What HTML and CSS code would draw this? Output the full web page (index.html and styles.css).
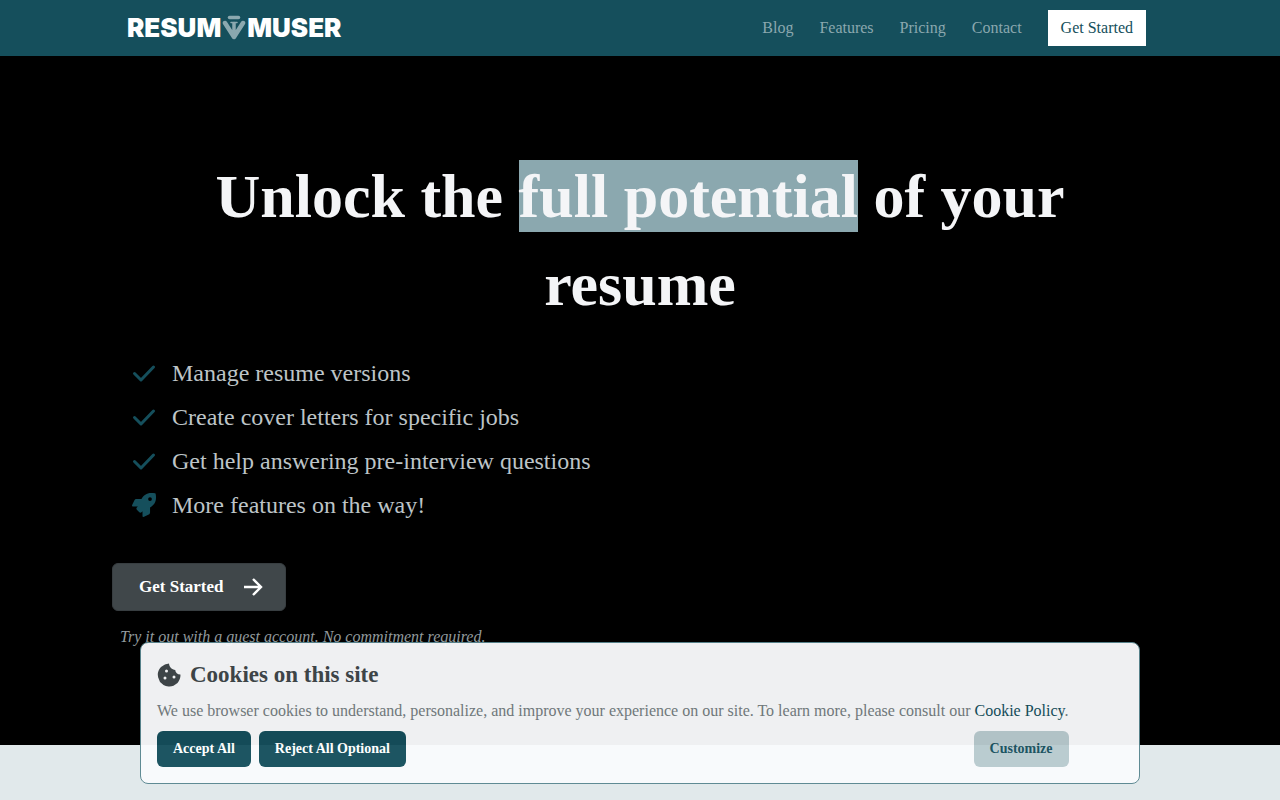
FILE: index.html
```
<!DOCTYPE html>
<html lang="en">
<head>
    <meta charset="UTF-8">
    <meta name="viewport" content="width=device-width, initial-scale=1.0">
    <title>Resumuser</title>
    <link rel="stylesheet" href="styles.css">
</head>
<body>
    <header class="header">
        <div class="container navbar">
            <a class="logo" href="#">
                <span>RESUM</span>
                <svg class="logo-icon" viewBox="0 0 24 26" aria-hidden="true">
                    <path d="M7.500 2.500h9" stroke-width="3.500"/>
                    <path d="M3 8l9 14 9-14" stroke-width="4.500"/>
                    <path d="M12 8.500V22" stroke-width="3.500"/>
                    <path d="M9 7.500h6" stroke-width="1.500"/>
                    <path d="M7.500 15h9L12 23z" fill="#8ba8af" stroke="none"/>
                </svg>
                <span>MUSER</span>
            </a>
            <nav class="nav">
                <a href="#">Blog</a>
                <a href="#">Features</a>
                <a href="#">Pricing</a>
                <a href="#">Contact</a>
                <a class="nav-cta" href="#">Get Started</a>
            </nav>
        </div>
    </header>

    <main>
        <section class="hero">
            <div class="container">
                <h1>Unlock the <mark>full potential</mark> of your resume</h1>
                <ul class="features">
                    <li>
                        <svg class="check" viewBox="0 0 24 24" aria-hidden="true"><path d="M2.500 12.500l6.500 6.500L21.500 6"/></svg>
                        Manage resume versions
                    </li>
                    <li>
                        <svg class="check" viewBox="0 0 24 24" aria-hidden="true"><path d="M2.500 12.500l6.500 6.500L21.500 6"/></svg>
                        Create cover letters for specific jobs
                    </li>
                    <li>
                        <svg class="check" viewBox="0 0 24 24" aria-hidden="true"><path d="M2.500 12.500l6.500 6.500L21.500 6"/></svg>
                        Get help answering pre-interview questions
                    </li>
                    <li>
                        <svg class="rocket" viewBox="0 0 512 512" aria-hidden="true"><path d="M505 19c-2-7-5-10-12-12C461 0 436 0 411 0 308 0 247 55 201 128H95c-16 0-35 12-43 27L3 256c-8 17 4 32 19 32h103l-22 22c-13 13-13 33 0 46l53 53c13 13 33 13 46 0l22-22v103c0 15 17 27 33 19l101-49c15-8 27-27 27-43V311c72-46 127-108 127-210 0-25 0-50-7-82zM384 168a40 40 0 1 1 0-80 40 40 0 0 1 0 80z"/></svg>
                        More features on the way!
                    </li>
                </ul>
                <button class="start-button" type="button">
                    Get Started
                    <svg viewBox="0 0 24 24" aria-hidden="true"><path d="M3 12h17M12 4l8 8-8 8"/></svg>
                </button>
                <p class="note">Try it out with a guest account. No commitment required.</p>
            </div>
        </section>
    </main>

    <aside class="cookies" aria-labelledby="cookies-title">
        <div class="cookies-content">
            <h2 id="cookies-title">
                <svg viewBox="0 0 24 24" aria-hidden="true">
                    <path fill-rule="evenodd" d="M12 .5C11 .8 9 1 7.500 1.800L4 4C2.500 5.500 1.500 7.500 1 9.500c-.5 1.800 0 3.500.2 5L3 19l3.500 3c1.500.9 3 1.300 5 1.500 1.800.2 3.500-.2 5-.8l4-2.700c1.300-1.700 2.300-3.500 2.700-5.500.3-1 .3-2 .2-3-3 0-5-1.800-5.200-4.500C15 6.500 12.200 4 12 .5zM9.500 6.500a1.500 1.500 0 1 0 0 3 1.500 1.500 0 0 0 0-3zM8 13.500a1.500 1.500 0 1 0 0 3 1.500 1.500 0 0 0 0-3zM17 12.500a1.500 1.500 0 1 0 0 3 1.500 1.500 0 0 0 0-3z"/>
                </svg>
                Cookies on this site
            </h2>
            <p>We use browser cookies to understand, personalize, and improve your experience on our site. To learn more, please consult our <a href="#">Cookie Policy</a>.</p>
            <div class="cookies-buttons">
                <button class="button" type="button">Accept All</button>
                <button class="button" type="button">Reject All Optional</button>
                <button class="button button-light" type="button">Customize</button>
            </div>
        </div>
    </aside>
</body>
</html>
```
FILE: styles.css
```
* {
    box-sizing: border-box;
}

body {
    margin: 0;
    font-family: "Liberation Serif", "Times New Roman", serif;
    font-size: 16px;
    line-height: 24px;
    background-color: #e1e9eb;
}

a {
    color: inherit;
    text-decoration: none;
}

button {
    font-family: inherit;
    border: none;
    cursor: pointer;
}

h1, h2, p, ul {
    margin: 0;
    padding: 0;
}

.container {
    max-width: 1056px;
    margin: 0 auto;
}

.header {
    background-color: #154f5c;
}

.navbar {
    display: flex;
    justify-content: space-between;
    align-items: center;
    min-height: 56px;
    padding: 0 22px 0 15px;
}

.logo {
    display: flex;
    align-items: center;
    gap: 1px;
    color: #fff;
    font-family: Inter, "Liberation Sans", sans-serif;
    font-size: 26px;
    font-weight: 900;
}

.logo-icon {
    width: 24px;
    height: 26px;
    fill: none;
    stroke: #8ba8af;
    stroke-linecap: round;
    stroke-linejoin: round;
}

.nav {
    display: flex;
    align-items: center;
    gap: 26px;
    color: #8ba8af;
}

.nav-cta {
    padding: 6px 13px;
    background-color: #fff;
    color: #154f5c;
}

.hero {
    min-height: 689px;
    padding: 96px 0 72px;
    background-color: #000;
}

h1 {
    padding: 0 32px;
    color: #f4f5f7;
    font-size: 62px;
    line-height: 88px;
    text-align: center;
}

mark {
    padding: 2px 0;
    background-color: #8ba8af;
    color: inherit;
}

.features {
    margin-top: 27px;
    padding-left: 20px;
    list-style: none;
    color: #bdc4c7;
    font-size: 24px;
    line-height: 36px;
}

.features li {
    display: flex;
    align-items: center;
    gap: 16px;
    margin-bottom: 8px;
}

.features svg {
    width: 24px;
    height: 24px;
}

.check {
    fill: none;
    stroke: #154f5c;
    stroke-width: 3;
    stroke-linecap: round;
    stroke-linejoin: round;
}

.rocket {
    fill: #154f5c;
}

.start-button {
    display: flex;
    align-items: center;
    gap: 17px;
    margin-top: 40px;
    padding: 11px 20px 11px 26px;
    border: 1px solid #383e41;
    border-radius: 6px;
    background-color: #40474a;
    color: #fff;
    font-size: 17px;
    font-weight: bold;
}

.start-button svg {
    width: 24px;
    height: 24px;
    fill: none;
    stroke: #fff;
    stroke-width: 2.400;
}

.note {
    margin-top: 14px;
    padding-left: 8px;
    color: #919a9d;
    font-style: italic;
}

/* Cookie banner */
.cookies {
    position: fixed;
    right: 16px;
    bottom: 16px;
    left: 16px;
    max-width: 1000px;
    margin: 0 auto;
    padding: 16px;
    border: 1px solid #5a8790;
    border-radius: 8px;
    background-color: #f9fafc;
    color: #747d80;
    opacity: 0.96;
}

.cookies-content {
    width: fit-content;
}

.cookies h2 {
    display: flex;
    align-items: center;
    gap: 9px;
    margin-bottom: 8px;
    color: #40474a;
    font-size: 23px;
    line-height: 32px;
}

.cookies h2 svg {
    width: 24px;
    height: 24px;
    fill: currentColor;
}

.cookies p a {
    color: #154f5c;
}

.cookies-buttons {
    display: flex;
    gap: 8px;
    margin-top: 8px;
}

.button {
    padding: 8px 16px;
    border-radius: 6px;
    background-color: #154f5c;
    color: #fff;
    font-size: 14px;
    font-weight: bold;
    line-height: 20px;
}

.button-light {
    margin-left: auto;
    background-color: #b9cacf;
    color: #154f5c;
}
```
